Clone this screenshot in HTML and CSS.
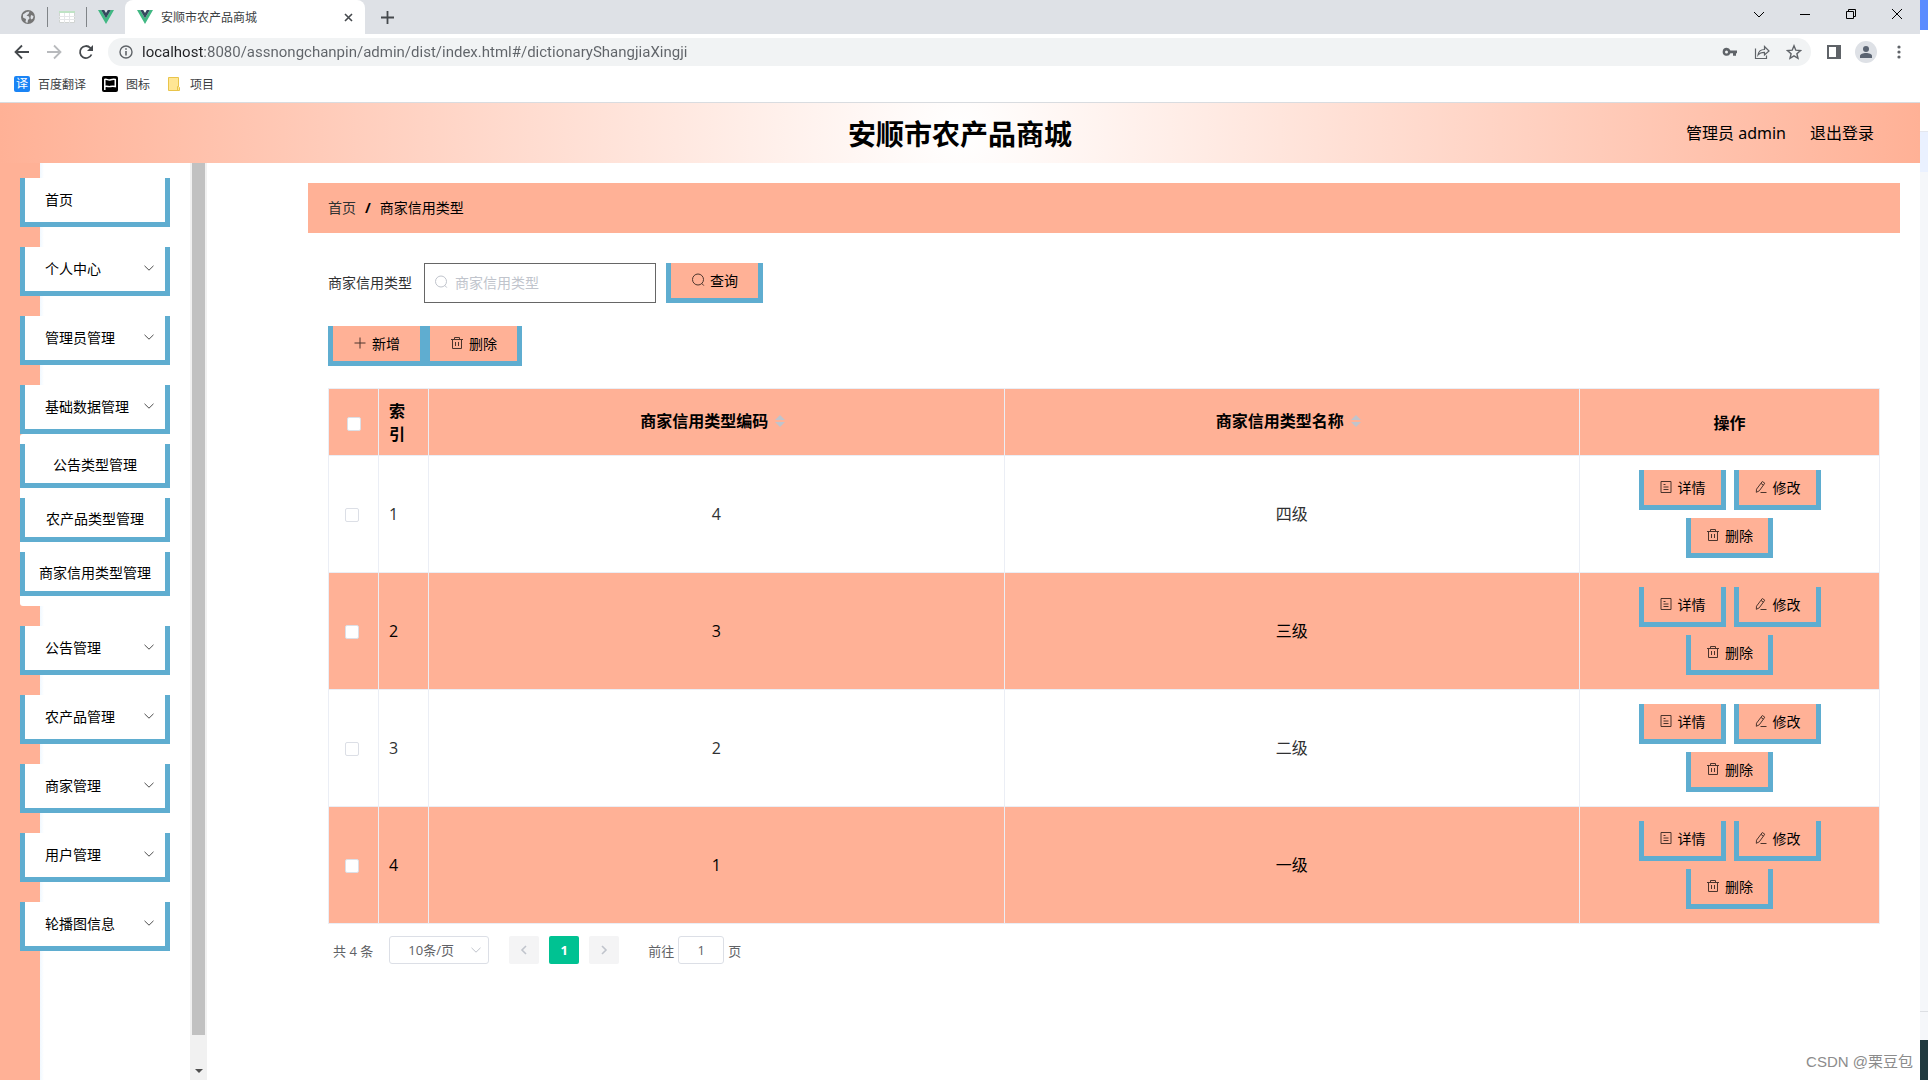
FILE: index.html
```
<!DOCTYPE html>
<html lang="zh-CN">
<head>
    <meta charset="UTF-8">
    <meta name="viewport" content="width=device-width, initial-scale=1.0">
    <title>安顺市农产品商城</title>
    <link rel="stylesheet" href="styles.css">
</head>
<body>
    <!-- shared icons -->
    <svg class="sprite" aria-hidden="true">
        <symbol id="vue" viewBox="0 0 16 14">
            <path fill="#41b883" d="M0 0h3.2L8 8.3 12.8 0H16L8 14z"/>
            <path fill="#35495e" d="M3.2 0h3L8 3.1 9.8 0h3L8 8.3z"/>
        </symbol>
        <symbol id="down" viewBox="0 0 14 14"><path d="M2.5 4.8 7 9.2l4.500-4.400"/></symbol>
        <symbol id="search" viewBox="0 0 14 14"><circle cx="7" cy="6.500" r="5.500"/><path d="m10.800 10.400 2 2.200"/></symbol>
        <symbol id="plus" viewBox="0 0 14 14"><path d="M7 1.500v11M1.500 7h11"/></symbol>
        <symbol id="trash" viewBox="0 0 14 14"><path d="M1 3.500h12M4.500 3.500v-2h5v2M2.500 3.500v9h9v-9M5.500 6v4M8.500 6v4"/></symbol>
        <symbol id="doc" viewBox="0 0 14 14"><path d="M2 1.500h10v11H2zM4.500 4.500h2M4.500 7h5M4.500 9.500h5"/></symbol>
        <symbol id="edit" viewBox="0 0 14 14"><path d="M8.300 1.500 10.800 3.200 5.300 10.800 2.300 12.300 2.500 9.200zM7 3.400l2.500 1.700M6.500 12.500h6"/></symbol>
    </svg>

    <div class="window">
        <div class="tabs">
            <div class="pinned">
                <svg width="16" height="16" viewBox="0 0 16 16"><circle cx="8" cy="8" r="7" fill="#757575"/><path fill="#dee1e6" d="M3 5.500 6.500 3l3-.5-1 2.500-2 1.500 2.500 1 .5 2-1.500 1.500-.5 3-2-1 .5-3L3 8.500zM11 6l2.500 1-.5 2.500-2 1-.5-2z"/></svg>
            </div>
            <div class="pinned">
                <svg width="16" height="12" viewBox="0 0 16 12"><path fill="#fff" stroke="#d0d4d2" d="M.5.5h15v11H.5z"/><path fill="#bfe3c5" d="M0 0h16v2H0z"/><path stroke="#e4e6e8" d="M0 5.500h16M0 8.500h16M5.500 2v10M10.500 2v10"/></svg>
            </div>
            <div class="pinned"><svg width="16" height="14"><use href="#vue"/></svg></div>
            <div class="tab">
                <svg width="16" height="14"><use href="#vue"/></svg>
                <span class="tab-title">安顺市农产品商城</span>
                <button class="plain" aria-label="关闭标签页"><svg class="line" width="9" height="9" viewBox="0 0 9 9"><path stroke-width="1.600" d="m1 1 7 7M8 1 1 8"/></svg></button>
            </div>
            <button class="plain new-tab" aria-label="新标签页"><svg class="line" width="13" height="13" viewBox="0 0 13 13"><path stroke-width="1.800" d="M6.500 0v13M0 6.500h13"/></svg></button>
            <div class="window-buttons">
                <button class="plain" aria-label="搜索标签页"><svg class="line" width="12" height="12" viewBox="0 0 12 12"><path d="m1 4 5 5 5-5"/></svg></button>
                <button class="plain" aria-label="最小化"><svg class="line" width="12" height="12" viewBox="0 0 12 12"><path d="M1 6.500h10"/></svg></button>
                <button class="plain" aria-label="还原"><svg class="line" width="12" height="12" viewBox="0 0 12 12"><path d="M1.500 3.500h7v7h-7zM3.500 3.500v-2h7v7h-2"/></svg></button>
                <button class="plain" aria-label="关闭"><svg class="line" width="12" height="12" viewBox="0 0 12 12"><path d="m1 1 10 10M11 1 1 11"/></svg></button>
            </div>
        </div>

        <div class="toolbar">
            <button class="plain" aria-label="后退"><svg class="line" width="16" height="16" viewBox="0 0 16 16"><path stroke-width="1.800" d="M15 8H2M8 1.500 1.500 8 8 14.500"/></svg></button>
            <button class="plain pale" aria-label="前进"><svg class="line" width="16" height="16" viewBox="0 0 16 16"><path stroke-width="1.800" d="M1 8h13M8 1.500 14.500 8 8 14.500"/></svg></button>
            <button class="plain" aria-label="重新加载"><svg class="line" width="16" height="16" viewBox="0 0 16 16"><path stroke-width="1.800" d="M13.500 10.500A6 6 0 1 1 12.300 3.800L14 5.500"/><path fill="currentColor" stroke="none" d="M15 1v6H9z"/></svg></button>
            <div class="address">
                <svg class="line" width="14" height="14" viewBox="0 0 14 14"><circle cx="7" cy="7" r="6" stroke-width="1.400"/><path stroke-width="1.600" d="M7 6v4.500M7 3.300v1.500"/></svg>
                <input class="url" type="text" aria-label="地址" value="localhost:8080/assnongchanpin/admin/dist/index.html#/dictionaryShangjiaXingji">
                <button class="plain" aria-label="密码"><svg width="16" height="10" viewBox="0 0 16 10"><path fill="#5f6368" fill-rule="evenodd" d="M4.500.8a4 4 0 1 0 3.900 5.400H11v2.500h3V6.200h1V3.500H8.400A4 4 0 0 0 4.500.8zm0 2.600a1.500 1.500 0 1 1 0 3 1.500 1.500 0 0 1 0-3z"/></svg></button>
                <button class="plain" aria-label="分享"><svg class="line" width="16" height="16" viewBox="0 0 16 16"><path stroke-width="1.200" d="M1.500 4.500v10h11v-3M4 11c.5-4 3-5.500 6.500-5.500v-3L15 7l-4.500 4V8.300C7.500 8.300 5.500 9 4 11z"/></svg></button>
                <button class="plain" aria-label="收藏"><svg class="line" width="16" height="16" viewBox="0 0 16 16"><path stroke-width="1.400" d="m8 1.800 1.800 4.400 4.700.4-3.600 3.100 1.100 4.600L8 11.900l-4 2.400 1.100-4.600L1.500 6.600l4.700-.4z"/></svg></button>
            </div>
            <div class="tools">
                <button class="plain" aria-label="侧边栏"><svg width="14" height="14" viewBox="0 0 14 14"><path fill="#5f6368" fill-rule="evenodd" d="M0 0h14v14H0zm2 2v10h7V2z"/></svg></button>
                <button class="plain" aria-label="用户"><svg width="22" height="22" viewBox="0 0 22 22"><circle cx="11" cy="11" r="11" fill="#dee1e6"/><circle cx="11" cy="8" r="3" fill="#5b6472"/><path fill="#5b6472" d="M5 17v-2c0-2 3-3 6-3s6 1 6 3v2z"/></svg></button>
                <button class="plain" aria-label="菜单"><svg width="4" height="14" viewBox="0 0 4 14"><g fill="#5f6368"><circle cx="2" cy="2" r="1.600"/><circle cx="2" cy="7" r="1.600"/><circle cx="2" cy="12" r="1.600"/></g></svg></button>
            </div>
        </div>

        <div class="bookmarks">
            <a href="#"><span class="bookmark-icon translate">译</span>百度翻译</a>
            <a href="#"><svg width="16" height="16" viewBox="0 0 16 16"><rect width="16" height="16" rx="2"/><path fill="none" stroke="#fff" stroke-width="1.500" d="M2.800 14V3.500c2-1 3 1 5 .5s3-1 5.500-.5v7c-2-.5-3.500-.5-5 0s-3-.5-5 0"/></svg>图标</a>
            <a href="#"><svg width="16" height="16" viewBox="0 0 16 16"><path fill="#ffe694" stroke="#e9c44a" d="M2.500 1.500h10v9l1 1v3h-11z"/><path fill="none" stroke="#e9c44a" d="M11.500 14v-3.500h1"/></svg>项目</a>
        </div>

        <header class="header">
            <h1>安顺市农产品商城</h1>
            <div class="user">
                <span>管理员 admin</span>
                <a href="#">退出登录</a>
            </div>
        </header>

        <div class="page">
            <aside class="sidebar">
                <nav class="menu">
                    <a class="menu-item" href="#">首页</a>
                    <button class="menu-item">个人中心<svg class="icon"><use href="#down"/></svg></button>
                    <button class="menu-item">管理员管理<svg class="icon"><use href="#down"/></svg></button>
                    <div class="menu-group">
                        <button class="menu-item">基础数据管理<svg class="icon"><use href="#down"/></svg></button>
                        <div class="submenu">
                            <a href="#">公告类型管理</a>
                            <a href="#">农产品类型管理</a>
                            <a href="#">商家信用类型管理</a>
                        </div>
                    </div>
                    <button class="menu-item">公告管理<svg class="icon"><use href="#down"/></svg></button>
                    <button class="menu-item">农产品管理<svg class="icon"><use href="#down"/></svg></button>
                    <button class="menu-item">商家管理<svg class="icon"><use href="#down"/></svg></button>
                    <button class="menu-item">用户管理<svg class="icon"><use href="#down"/></svg></button>
                    <button class="menu-item">轮播图信息<svg class="icon"><use href="#down"/></svg></button>
                </nav>
                <div class="scrollbar">
                    <div class="thumb"></div>
                    <svg width="8" height="4" viewBox="0 0 8 4"><path fill="#505050" d="M0 0h8L4 4z"/></svg>
                </div>
            </aside>

            <main>
                <div class="breadcrumb">
                    <a href="#">首页</a><b>/</b><span>商家信用类型</span>
                </div>

                <div class="content">
                    <form class="search">
                        <label for="typeName">商家信用类型</label>
                        <div class="search-box">
                            <svg class="icon"><use href="#search"/></svg>
                            <input type="text" id="typeName" placeholder="商家信用类型">
                        </div>
                        <button type="button" class="btn"><svg class="icon"><use href="#search"/></svg>查询</button>
                    </form>

                    <div class="actions">
                        <button class="btn"><svg class="icon"><use href="#plus"/></svg>新增</button>
                        <button class="btn"><svg class="icon"><use href="#trash"/></svg>删除</button>
                    </div>

                    <table>
                        <colgroup>
                            <col class="col-small"><col class="col-small"><col><col><col class="col-ops">
                        </colgroup>
                        <thead>
                            <tr>
                                <th><input type="checkbox" aria-label="全选"></th>
                                <th class="index">索引</th>
                                <th>商家信用类型编码<span class="sort"></span></th>
                                <th>商家信用类型名称<span class="sort"></span></th>
                                <th>操作</th>
                            </tr>
                        </thead>
                        <tbody>
                            <tr>
                                <td class="check"><input type="checkbox" aria-label="选择第1行"></td>
                                <td class="index">1</td>
                                <td>4</td>
                                <td>四级</td>
                                <td>
                                    <div class="ops">
                                        <button class="btn small"><svg class="icon"><use href="#doc"/></svg>详情</button>
                                        <button class="btn small"><svg class="icon"><use href="#edit"/></svg>修改</button>
                                        <button class="btn small"><svg class="icon"><use href="#trash"/></svg>删除</button>
                                    </div>
                                </td>
                            </tr>
                            <tr>
                                <td class="check"><input type="checkbox" aria-label="选择第2行"></td>
                                <td class="index">2</td>
                                <td>3</td>
                                <td>三级</td>
                                <td>
                                    <div class="ops">
                                        <button class="btn small"><svg class="icon"><use href="#doc"/></svg>详情</button>
                                        <button class="btn small"><svg class="icon"><use href="#edit"/></svg>修改</button>
                                        <button class="btn small"><svg class="icon"><use href="#trash"/></svg>删除</button>
                                    </div>
                                </td>
                            </tr>
                            <tr>
                                <td class="check"><input type="checkbox" aria-label="选择第3行"></td>
                                <td class="index">3</td>
                                <td>2</td>
                                <td>二级</td>
                                <td>
                                    <div class="ops">
                                        <button class="btn small"><svg class="icon"><use href="#doc"/></svg>详情</button>
                                        <button class="btn small"><svg class="icon"><use href="#edit"/></svg>修改</button>
                                        <button class="btn small"><svg class="icon"><use href="#trash"/></svg>删除</button>
                                    </div>
                                </td>
                            </tr>
                            <tr>
                                <td class="check"><input type="checkbox" aria-label="选择第4行"></td>
                                <td class="index">4</td>
                                <td>1</td>
                                <td>一级</td>
                                <td>
                                    <div class="ops">
                                        <button class="btn small"><svg class="icon"><use href="#doc"/></svg>详情</button>
                                        <button class="btn small"><svg class="icon"><use href="#edit"/></svg>修改</button>
                                        <button class="btn small"><svg class="icon"><use href="#trash"/></svg>删除</button>
                                    </div>
                                </td>
                            </tr>
                        </tbody>
                    </table>

                    <div class="pagination">
                        <span>共 4 条</span>
                        <div class="page-size">
                            <select aria-label="每页条数">
                                <option>10条/页</option>
                            </select>
                            <svg class="icon"><use href="#down"/></svg>
                        </div>
                        <div class="pager">
                            <button aria-label="上一页" disabled><svg class="line" width="8" height="10" viewBox="0 0 8 10"><path stroke-width="1.600" d="M6 1 2 5l4 4"/></svg></button>
                            <button class="active">1</button>
                            <button aria-label="下一页" disabled><svg class="line" width="8" height="10" viewBox="0 0 8 10"><path stroke-width="1.600" d="m2 1 4 4-4 4"/></svg></button>
                        </div>
                        <div class="jump">
                            <label for="jumpPage">前往</label>
                            <input type="text" id="jumpPage" value="1">
                            <span>页</span>
                        </div>
                    </div>
                </div>
            </main>
        </div>
    </div>

    <!-- edge of the window behind -->
    <div class="behind">
        <div class="behind-title"></div>
        <div class="behind-bar"></div>
        <div class="behind-active"></div>
        <div class="behind-body"></div>
        <div class="behind-foot"></div>
        <div class="behind-dark"></div>
    </div>

    <div class="watermark">CSDN @栗豆包</div>
</body>
</html>
```
FILE: styles.css
```
* {
    box-sizing: border-box;
}

body {
    margin: 0;
    min-height: 100vh;
    display: flex;
    position: relative;
    background: #fff;
    color: #000;
    font-family: "Open Sans", "Noto Sans CJK SC", sans-serif;
    font-size: 14px;
}

button, input, select {
    font-family: inherit;
    font-size: inherit;
    color: inherit;
    margin: 0;
}

button {
    cursor: pointer;
}

a {
    color: inherit;
    text-decoration: none;
}

svg {
    display: block;
    flex: none;
}

.sprite {
    position: absolute;
    width: 0;
    height: 0;
}

.icon {
    width: 14px;
    height: 14px;
    fill: none;
    stroke: currentColor;
    opacity: 0.7;
}

.line {
    fill: none;
    stroke: currentColor;
}

.plain {
    display: flex;
    padding: 0;
    border: none;
    background: none;
    color: #45494d;
}

.window {
    flex: 1;
    min-width: 0;
    display: flex;
    flex-direction: column;
}

/* browser */
.tabs {
    display: flex;
    align-items: center;
    height: 34px;
    padding-left: 9px;
    background: #dee1e6;
}

.pinned {
    display: flex;
    align-items: center;
    justify-content: center;
    width: 39px;
    height: 20px;
    border-right: 1px solid #808488;
}

.pinned:nth-child(3) {
    width: 38px;
    border: none;
}

.tab {
    display: flex;
    align-items: center;
    align-self: stretch;
    width: 240px;
    padding: 0 12px;
    gap: 8px;
    border-radius: 8px 8px 0 0;
    background: #fff;
}

.tab-title {
    flex: 1;
    font-size: 12px;
    color: #3c4043;
}

.new-tab {
    margin-left: 16px;
}

.window-buttons {
    display: flex;
    gap: 34px;
    margin-left: auto;
    padding: 0 17px 6px 0;
}

.window-buttons .plain {
    color: #000;
}

.toolbar {
    display: flex;
    align-items: center;
    gap: 16px;
    height: 36px;
    padding: 0 19px 0 14px;
}

.pale {
    color: #b8babd;
}

.address {
    flex: 1;
    display: flex;
    align-items: center;
    gap: 16px;
    height: 28px;
    margin-left: -2px;
    padding: 0 9px 0 11px;
    border-radius: 14px;
    background: #f1f3f4;
    color: #5f6368;
}

.address .plain {
    color: #5f6368;
}

/* host part of the url is darker than the path */
.url {
    flex: 1;
    min-width: 0;
    margin-left: -7px;
    padding: 0 0 1px;
    border: none;
    outline: none;
    background: linear-gradient(to right, #202124 61px, #5f6368 61px);
    -webkit-background-clip: text;
    background-clip: text;
    color: transparent;
    font-family: Roboto, "Noto Sans CJK SC", sans-serif;
    font-size: 15px;
}

.tools {
    display: flex;
    align-items: center;
    gap: 14px;
}

.tools .plain:last-child {
    margin-left: 6px;
}

.bookmarks {
    display: flex;
    align-items: center;
    gap: 16px;
    height: 33px;
    padding: 0 14px 4px;
    border-bottom: 1px solid #d9dce0;
    font-size: 12px;
    color: #3c4043;
}

.bookmarks a {
    display: flex;
    align-items: center;
    gap: 8px;
}

.bookmark-icon {
    width: 16px;
    border-radius: 2px;
    text-align: center;
    line-height: 16px;
}

.translate {
    background: #1a84f5;
    color: #fff;
}

/* page header */
.header {
    display: grid;
    grid-template-columns: 1fr auto 1fr;
    align-items: center;
    height: 60px;
    background: radial-gradient(circle, #fff, #ffb196);
}

.header h1 {
    grid-column: 2;
    margin: 0;
    padding-top: 2px;
    font-size: 28px;
    line-height: 40px;
}

.user {
    display: flex;
    justify-content: flex-end;
    gap: 24px;
    padding: 0 46px 2px 0;
    font-family: "Noto Sans", "Noto Sans CJK SC", sans-serif;
    font-size: 16px;
}

.page {
    flex: 1;
    display: flex;
}

/* sidebar */
.sidebar {
    display: flex;
    width: 207px;
    background: linear-gradient(to right, #ffb196 40px, #f0f8ff 40px, #fff 44px);
}

.menu {
    flex: 1;
    display: flex;
    flex-direction: column;
    gap: 20px;
    padding: 15px 20px;
}

.menu-item {
    display: flex;
    align-items: center;
    justify-content: space-between;
    width: 150px;
    height: 49px;
    padding: 0 9px 2px 20px;
    border: solid #5fadd0;
    border-width: 0 5px 5px;
    background: #fff;
    text-align: left;
}

.submenu {
    display: flex;
    flex-direction: column;
    gap: 10px;
    padding: 10px 0;
    border-radius: 3px;
    background: #fff;
}

.submenu a {
    width: 150px;
    height: 44px;
    border: solid #5fadd0;
    border-width: 0 5px 5px;
    line-height: 42px;
    text-align: center;
    white-space: nowrap;
}

.scrollbar {
    display: flex;
    flex-direction: column;
    align-items: center;
    gap: 34px;
    width: 17px;
    padding-bottom: 7px;
    background: #f1f1f1;
}

.thumb {
    flex: 1;
    width: 13px;
    background: #c1c1c1;
}

/* main */
main {
    flex: 1;
    min-width: 0;
    padding: 20px 20px 20px 101px;
}

.breadcrumb {
    display: flex;
    align-items: center;
    gap: 9px;
    height: 50px;
    padding: 0 20px 2px;
    background: #ffb196;
}

.breadcrumb a {
    color: #303133;
}

.content {
    padding: 30px 20px 0;
}

.search {
    display: flex;
    align-items: center;
    gap: 10px;
    margin-bottom: 23px;
}

.search label {
    color: #303133;
    padding: 0 2px 2px 0;
}

.search-box {
    display: flex;
    align-items: center;
    gap: 7px;
    width: 232px;
    height: 40px;
    padding: 0 9px 2px;
    border: 1px solid #666;
    color: #c0c4cc;
}

.search-box .icon {
    opacity: 1;
}

.search-box input {
    flex: 1;
    min-width: 0;
    padding: 0;
    border: none;
    outline: none;
    color: #606266;
}

.search-box input::placeholder {
    color: #c0c4cc;
}

.btn {
    display: flex;
    align-items: center;
    justify-content: center;
    gap: 5px;
    height: 40px;
    padding: 0 20px 2px;
    border: solid #5fadd0;
    border-width: 0 5px 5px;
    background: #ffb196;
    color: #000;
    font-size: 14px;
}

.btn.small {
    padding: 0 15px 2px;
}

.actions {
    display: flex;
    margin-bottom: 22px;
}

table {
    width: 100%;
    table-layout: fixed;
    border-collapse: separate;
    border-spacing: 0;
    border: solid #ebeef5;
    border-width: 1px 0 0 1px;
    font-size: 16px;
    line-height: 23px;
    text-align: center;
}

.col-small {
    width: 50px;
}

.col-ops {
    width: 300px;
}

th, td {
    padding: 11px 0 9px;
    border: solid #ebeef5;
    border-width: 0 1px 1px 0;
}

th, tbody tr:nth-child(even) td {
    background: #ffb196;
}

td {
    padding: 14px 0;
    color: #303133;
}

tbody tr:nth-child(even) td {
    color: #000;
}

.index {
    padding-left: 10px;
    padding-right: 10px;
    text-align: left;
}

.check {
    padding-right: 4px;
}

input[type="checkbox"] {
    appearance: none;
    width: 14px;
    height: 14px;
    border: 1px solid #dcdfe6;
    border-radius: 2px;
    background: #fff;
    vertical-align: middle;
}

.sort {
    display: inline-flex;
    flex-direction: column;
    align-items: center;
    justify-content: center;
    gap: 2px;
    width: 24px;
    height: 34px;
    margin: -6px 0 -2px;
    vertical-align: middle;
}

.sort::before, .sort::after {
    content: "";
    border: 5px solid transparent;
}

.sort::before {
    border-top: none;
    border-bottom-color: #c0c4cc;
}

.sort::after {
    border-bottom: none;
    border-top-color: #c0c4cc;
}

.ops {
    display: flex;
    flex-wrap: wrap;
    justify-content: center;
    gap: 8px;
    padding: 0 50px;
}

/* pagination */
.pagination {
    display: flex;
    align-items: center;
    padding: 12px 5px;
    font-size: 13px;
    color: #606266;
}

.page-size {
    display: flex;
    align-items: center;
    position: relative;
    margin: 0 20px 0 16px;
}

.page-size select {
    appearance: none;
    width: 100px;
    height: 28px;
    padding: 0 28px 0 12px;
    border: 1px solid #dcdfe6;
    border-radius: 3px;
    background: #fff;
    text-align: center;
    text-align-last: center;
}

.page-size .icon {
    position: absolute;
    right: 6px;
    color: #c0c4cc;
    opacity: 1;
    pointer-events: none;
}

.pager {
    display: flex;
    gap: 10px;
}

.pager button {
    display: flex;
    align-items: center;
    justify-content: center;
    width: 30px;
    height: 28px;
    padding: 0;
    border: none;
    border-radius: 2px;
    background: #f4f4f5;
    color: #c0c4cc;
    font-weight: bold;
}

.pager .active {
    background: #00c292;
    color: #fff;
}

.jump {
    display: flex;
    align-items: center;
    gap: 4px;
    margin-left: 29px;
}

.jump input {
    width: 46px;
    height: 28px;
    padding: 0;
    border: 1px solid #dcdfe6;
    border-radius: 3px;
    text-align: center;
}

.behind {
    display: flex;
    flex-direction: column;
    width: 8px;
    background: #f5f7fa;
}

.behind-title {
    height: 30px;
    background: #5b8cff;
}

.behind-bar {
    height: 102px;
    background: #fff;
    border-bottom: 1px solid #e4e7ee;
}

.behind-active {
    height: 40px;
    background: #eaf1ff;
}

.behind-body {
    flex: 1;
}

.behind-foot {
    height: 29px;
    border-top: 1px solid #dcdfe3;
}

.behind-dark {
    height: 40px;
    background: #213a40;
}

.watermark {
    position: absolute;
    right: 15px;
    bottom: 8px;
    font-family: "Liberation Sans", "Noto Sans CJK SC", sans-serif;
    font-size: 15px;
    line-height: 20px;
    color: #8c8c8c;
}
```
